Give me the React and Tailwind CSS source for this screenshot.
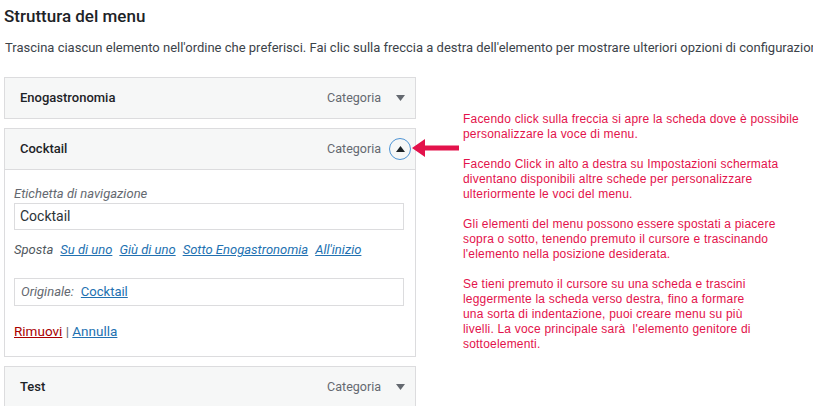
import React from 'react';

const items = [
    { title: 'Enogastronomia', type: 'Categoria', open: false },
    { title: 'Cocktail', type: 'Categoria', open: true },
    { title: 'Test', type: 'Categoria', open: false },
];

const notes = [
    ['Facendo click sulla freccia si apre la scheda dove è possibile', 'personalizzare la voce di menu.'],
    ['Facendo Click in alto a destra su Impostazioni schermata', 'diventano disponibili altre schede per personalizzare', 'ulteriormente le voci del menu.'],
    ['Gli elementi del menu possono essere spostati a piacere', 'sopra o sotto, tenendo premuto il cursore e trascinando', "l'elemento nella posizione desiderata."],
    ['Se tieni premuto il cursore su una scheda e trascini', 'leggermente la scheda verso destra, fino a formare', 'una sorta di indentazione, puoi creare menu su più', "livelli. La voce principale sarà  l'elemento genitore di", 'sottoelementi.'],
];

const ItemHeader = ({ title, type, open }) => (
    <div className="flex items-center h-[40px] pl-[15px] pr-[4px] bg-[#f6f7f7]">
        <span className="text-[13px] font-medium text-[#1d2327]">{title}</span>
        <span className="ml-auto text-[12.5px] text-[#646970]">{type}</span>
        {open ? (
            <span className="ml-[8px] w-[22px] h-[22px] rounded-full border border-[#4f94d4] flex items-center justify-center">
                <svg width="9" height="6" viewBox="0 0 9 6"><path d="M4.5 0L9 6H0z" fill="#1d2327" /></svg>
            </span>
        ) : (
            <span className="ml-[8px] w-[22px] h-[22px] flex items-center justify-center">
                <svg width="9" height="6" viewBox="0 0 9 6"><path d="M0 0h9L4.5 6z" fill="#646970" /></svg>
            </span>
        )}
    </div>
);

const ItemSettings = () => (
    <div className="border-t border-[#dcdcde] bg-white px-[9px] pt-[15px] pb-[15px] text-[13px]">
        <div className="italic text-[#646970] leading-[18px]">Etichetta di navigazione</div>
        <div className="w-[390px] h-[27px] border border-[#dcdcde] flex items-center px-[5px] text-[14px] text-[#2c3338]">
            Cocktail
        </div>
        <div className="mt-[10px] leading-[19px] flex gap-[7px]">
            <span className="italic text-[#50575e]">Sposta</span>
            {['Su di uno', 'Giù di uno', 'Sotto Enogastronomia', "All'inizio"].map((l) => (
                <a key={l} className="italic underline text-[#2271b1]">{l}</a>
            ))}
        </div>
        <div className="mt-[19px] w-[390px] h-[28px] border border-[#dcdcde] flex items-center px-[6px] gap-[7px]">
            <span className="italic text-[#646970]">Originale:</span>
            <a className="underline text-[#2271b1]">Cocktail</a>
        </div>
        <div className="mt-[15px] leading-[20px] text-[13.5px]">
            <a className="underline text-[#a00]">Rimuovi</a>
            <span className="text-[#646970]"> | </span>
            <a className="underline text-[#2271b1]">Annulla</a>
        </div>
    </div>
);

export default function App() {
    return (
        <div className="relative w-[813px] h-[406px] overflow-hidden bg-white font-['Roboto',sans-serif] text-[#1d2327]">
            <h2 className="pl-[4px] pt-[3px] text-[17px] leading-[26px] font-medium">Struttura del menu</h2>
            <p className="pl-[5px] mt-[9px] text-[13px] leading-[20px] text-[#3c434a] whitespace-nowrap">
                Trascina ciascun elemento nell'ordine che preferisci. Fai clic sulla freccia a destra dell'elemento per mostrare ulteriori opzioni di configurazione.
            </p>

            <div className="flex">
                <div className="ml-[4px] mt-[19px] w-[412px] flex flex-col gap-[9px]">
                    {items.map((it) => (
                        <div key={it.title} className="border border-[#dcdcde]">
                            <ItemHeader {...it} />
                            {it.open && <ItemSettings />}
                        </div>
                    ))}
                </div>

                <div className="ml-[47px] pt-[54px] font-['Liberation_Sans',Arial,sans-serif] text-[12px] leading-[15px] text-[#e3124b] tracking-[0.2px]">
                    {notes.map((p, i) => (
                        <div key={i} className="mb-[15px]">
                            {p.map((line) => (
                                <div key={line} className="whitespace-pre">{line}</div>
                            ))}
                        </div>
                    ))}
                </div>
            </div>

            {/* pointer from the notes to the open toggle */}
            <svg className="absolute left-[412px] top-[139px]" width="47" height="18" viewBox="0 0 47 18">
                <path d="M0 9L13 0V6.5H47V11.5H13V18z" fill="#e3124b" />
            </svg>
        </div>
    );
}
